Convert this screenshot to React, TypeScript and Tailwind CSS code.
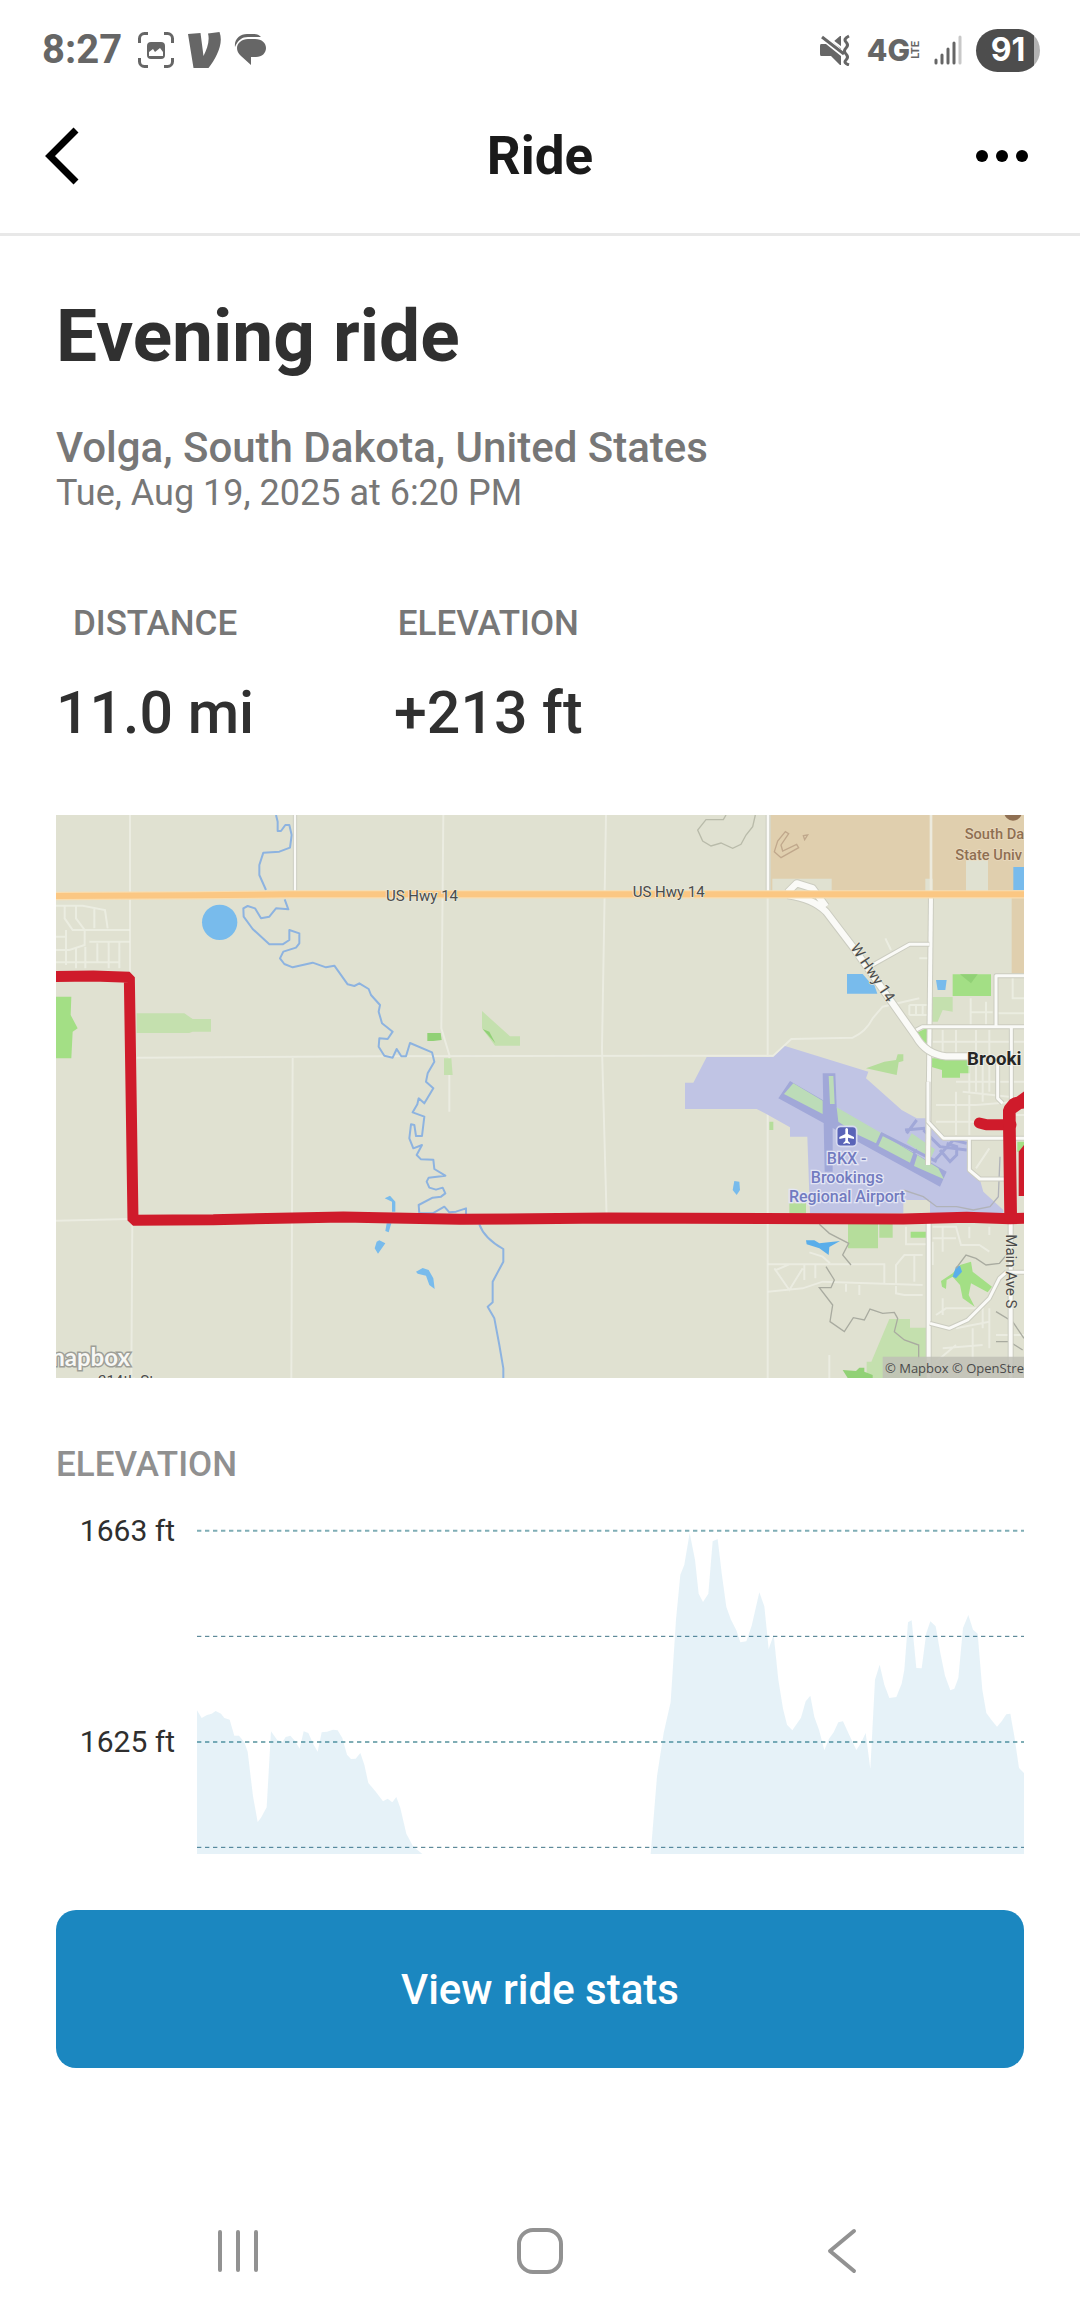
import type { ReactNode } from 'react'

const stats = [
  ['DISTANCE', '11.0 mi'],
  ['ELEVATION', '+213 ft'],
]

const gridLines = [
  { y: 53, color: '#7fadb5', width: 6 },
  { y: 370, color: '#3f7486', width: 3 },
  { y: 687, color: '#7fadb5', width: 6 },
  { y: 1003, color: '#3f7486', width: 3 },
]

const profileWest =
  'M0 592L14 615 30 606 44 602 56 594 72 602 82 615 98 620 112 668 126 668 142 688 152 716 168 850 182 927 192 914 209 883 222 655 240 680 256 688 266 672 280 668 294 684 308 707 320 655 334 660 350 695 362 716 374 658 390 656 408 650 422 652 436 675 450 725 462 738 476 737 490 720 502 755 514 810 534 833 558 865 572 857 586 868 598 852 610 885 628 962 648 1000 676 1023H0Z'

const profileEast =
  'M1361 1023L1380 790 1400 660 1421 567 1437 320 1450 185 1462 155 1478 60 1494 140 1505 242 1518 267 1534 242 1547 85 1562 78 1574 180 1588 282 1602 320 1618 352 1630 388 1648 385 1664 338 1687 238 1702 280 1715 408 1730 365 1744 500 1758 587 1770 635 1786 652 1812 614 1826 565 1840 548 1852 612 1866 650 1882 712 1896 677 1910 658 1924 628 1938 625 1954 660 1978 711 1992 690 2006 660 2020 768 2034 500 2048 455 2062 515 2077 555 2098 552 2114 512 2122 470 2133 328 2144 322 2158 465 2174 466 2188 360 2200 325 2216 340 2230 420 2244 488 2260 532 2272 527 2284 495 2298 345 2314 306 2328 350 2342 362 2356 530 2368 600 2384 622 2400 641 2414 625 2428 604 2440 602 2452 670 2466 765 2481 780V1023Z'

function StatusBar() {
  return (
    <div className="flex h-[78px] items-center justify-between pl-[42px] pr-10 pt-[22px] text-[#666]">
      <div className="flex items-center gap-4">
        <span className="text-[40px] font-bold leading-10">8:27</span>
        <svg viewBox="0 0 36 36" className="h-9 w-9" fill="none" stroke="currentColor" strokeWidth="3">
          <path d="M1.500 11V6.500A5 5 0 0 1 6.500 1.500H10M26 1.500H29.500A5 5 0 0 1 34.500 6.500V11M34.500 26V29.500A5 5 0 0 1 29.500 34.500H26M10 34.500H6.500A5 5 0 0 1 1.500 29.500V26" />
          <rect x="9" y="10" width="18" height="17" rx="4" fill="currentColor" stroke="none" />
          <path d="M11 23V20L15 17 17 20 22 16 25 20V24H11Z" fill="#fff" stroke="none" />
        </svg>
        <svg viewBox="0 0 34 36" className="-ml-0.5 h-9 w-[34px]" fill="currentColor">
          <path d="M0 2L12.500 1 15.500 24C19 17 22 9 20 1.500L31.500 0C36 12 28 26 20.500 36H5.500Z" />
        </svg>
        <svg viewBox="0 0 32 32" className="-ml-1 h-8 w-8" fill="currentColor">
          <path d="M1 13C0 5 6 0 13 0H19C23 0 25 1 27 3H14C8 3 4 6 1 13Z" />
          <path d="M14 5H21C28 5 32 9 32 14S28 23 22 23H17V31L7 22C4 19 3 17 3 14C3 9 8 5 14 5Z" />
        </svg>
      </div>
      <div className="flex items-center gap-3">
        <svg viewBox="0 0 32 32" className="mr-1 h-8 w-8" fill="currentColor">
          <path d="M2 10H7L22 22V31H21L12 22H2Q1 22 1 20V12Q1 10 2 10ZM14 8L21 2H22V15Z" />
          <path d="M3 3L25 20" stroke="currentColor" strokeWidth="3" fill="none" />
          <path d="M6 1L28 18" stroke="#fff" strokeWidth="2" fill="none" />
          <path d="M30 2Q24 5 27 8T27 14T27 20T27 26T30 31" stroke="currentColor" strokeWidth="3" fill="none" />
        </svg>
        <span className="flex items-center">
          <span className="font-[Inter] text-[30px] font-extrabold leading-8">4G</span>
          <span className="rotate-180 text-[11px] font-bold leading-3 [writing-mode:vertical-rl]">LTE</span>
        </span>
        <svg viewBox="0 0 28 30" className="mr-0.5 h-[30px] w-7" stroke="currentColor" strokeWidth="3" strokeLinecap="round">
          <path d="M2 25V28M8 20V28M14 14V28M20 8V28" />
          <path d="M26 2V28" stroke="#c8c8c8" />
        </svg>
        <span className="flex h-[43px] w-16 items-center justify-center rounded-full bg-linear-to-r from-[#4d4d4d] from-90% to-[#b3b3b3] to-90% font-[Inter] text-[32px] font-bold leading-8 text-white">
          91
        </span>
      </div>
    </div>
  )
}

function Header() {
  return (
    <header className="grid h-[158px] grid-cols-[1fr_auto_1fr] items-center border-b-[3px] border-[#e8e8e8] px-[45px]">
      <button type="button" aria-label="Back" className="justify-self-start">
        <svg viewBox="0 0 34 58" className="h-[58px] w-[34px]" fill="none" stroke="#000" strokeWidth="7">
          <path d="M31 3L5 29 31 55" />
        </svg>
      </button>
      <h1 className="text-[53px] font-bold leading-[64px] text-[#1a1a1a]">Ride</h1>
      <button type="button" aria-label="More options" className="mr-[7px] justify-self-end">
        <svg viewBox="0 0 52 12" className="h-3 w-[52px]" fill="#000">
          <circle cx="6" cy="6" r="6" />
          <circle cx="26" cy="6" r="6" />
          <circle cx="46" cy="6" r="6" />
        </svg>
      </button>
    </header>
  )
}

function MinorRoads({ children }: { children: ReactNode }) {
  return (
    <g fill="none" stroke="#f1f2ea" strokeWidth="6" opacity="0.65">
      {children}
    </g>
  )
}

function MajorRoad({ d, width = 12 }: { d: string; width?: number }) {
  return (
    <g fill="none" strokeLinejoin="round">
      <path d={d} stroke="#cbccc0" strokeWidth={width + 6} />
      <path d={d} stroke="#fafaf7" strokeWidth={width} />
    </g>
  )
}

function RouteMap() {
  return (
    <svg
      role="img"
      aria-label="Map of the ride"
      viewBox="0 0 2904 1689"
      className="mt-[66px] block h-auto w-full bg-[#e0e1d1] font-[Roboto,sans-serif]"
    >
      {/* campus */}
      <path d="M2144 0H2904V475H2867V245H2144Z" fill="#e0cfae" />
      <path d="M2149 191H2327V230H2149ZM2608 191H2630V230H2608ZM2730 130H2796V230H2730Z" fill="#e0e1d1" />

      {/* section roads */}
      <MinorRoads>
        <path d="M222 0V470M229 1220L226 1689M710 725L706 1689M242 728L972 724L1882 722H2152L2206 672L2390 668Q2430 650 2450 610L2480 575L2590 550" />
        <path d="M1162 0L1156 640L1180 720V890M1650 0L1638 700L1652 1209M2135 245V725M2135 890V1689M0 1217L220 1212M2320 1620V1689" />
      </MinorRoads>

      {/* west town streets */}
      <MinorRoads>
        <path d="M0 272H80L147 285 155 340M26 272V310L50 345H222M60 270V310L86 345V390L40 405H0M115 280V340M100 380H222M0 442H190M60 400V460M88 395V460M124 385V440M158 380V460M190 380V460M30 345V450M0 365H30" />
      </MinorRoads>

      {/* parks */}
      <path d="M0 545H46L44 600 65 640 50 650 46 730H0Z" fill="#a3df85" />
      <path d="M242 595H385L410 612H465V650H410L400 654H242Z" fill="#c4e0ae" />
      <path d="M1114 654H1154L1157 675 1132 678H1114Z" fill="#91d176" />
      <path d="M1278 588L1362 664H1392V692H1317L1278 640Z" fill="#c4e0ae" />
      <path d="M1164 730H1186L1190 780H1164Z" fill="#c4e0ae" />
      <path d="M1280 642L1300 650 1318 685Z" fill="#91d176" />
      <path d="M2690 478H2805V543H2690Z" fill="#a3df85" />
      <path d="M2712 478L2745 505 2765 478Z" fill="#91d176" />
      <path d="M2628 546H2690V590L2660 585 2645 620H2628Z" fill="#c4e0ae" />
      <path d="M2580 655L2616 637V690L2580 660Z" fill="#a3df85" />
      <path d="M2624 730H2740L2742 775H2712V788H2658V765L2624 755Z" fill="#a3df85" />
      <path d="M2430 760L2485 740 2520 735 2525 718H2542V738L2528 742 2522 780Z" fill="#b5dd9b" />

      {/* river */}
      <g fill="none" stroke="#8db3e0" strokeWidth="6" strokeLinejoin="round">
        <path d="M660 0L665 20V48H675L688 30H700L707 60 702 98 670 110 622 113 610 150V180L630 225" />
        <path d="M686 253L697 283 660 280 640 305 615 310 597 280 575 273 562 280 563 305 590 342 640 388 680 388 700 375V345L730 355V385L720 398 682 410 672 430 685 447 710 457 770 443 810 457 835 452 875 508 895 513 910 505 938 522 945 540 972 570 968 590 978 625 1010 650 995 672 970 670 968 695 985 722 1010 728 1022 702 1036 724H1050L1062 684 1128 712 1135 740 1115 775 1110 800 1132 820 1105 865 1088 850 1084 868 1070 892 1105 905 1098 963H1080L1075 930 1065 928 1060 970 1072 1000 1098 990 1082 1020 1095 1033 1132 1034 1135 1062 1168 1082 1118 1088 1112 1100 1120 1118 1140 1124 1160 1118 1168 1135 1155 1145 1130 1148 1088 1170 1090 1195 1130 1195 1165 1175 1180 1192 1200 1190 1230 1180V1200" />
        <path d="M1270 1228Q1285 1270 1342 1302V1340L1310 1400V1462L1295 1475 1315 1510 1330 1590 1342 1660V1689" />
      </g>

      {/* ponds */}
      <g fill="#78bbec">
        <circle cx="491" cy="322" r="53" />
        <path d="M986 1150L1002 1142 1018 1160V1190H1008V1160ZM992 1225H1006L998 1252 988 1248ZM970 1276L988 1285 966 1316 956 1300 962 1280Z" />
        <path d="M1080 1370L1100 1359 1118 1365 1132 1390 1136 1422 1120 1410 1110 1382 1085 1376Z" />
        <path d="M2373 477H2420L2440 500 2455 510 2464 536H2373ZM2640 495H2672L2668 525H2645ZM2872 156H2904V225H2872Z" />
        <path d="M2035 1098L2050 1100 2052 1125 2042 1140 2030 1125Z" />
      </g>

      {/* contour outlines */}
      <g fill="none" stroke="#b9bbaa" strokeWidth="4">
        <path d="M2010 0L2002 14H1950L1925 45 1940 78 1965 93 1995 84 2030 100 2055 88 2070 60 2090 35 2098 0" />
        <path d="M2188 50L2165 78 2155 110 2175 128 2228 98 2222 88 2180 108 2175 90 2198 56ZM2242 62L2255 60 2246 74Z" stroke="#c0a88c" />
      </g>

      {/* downtown streets */}
      <MinorRoads>
        <path d="M2744 550V640M2790 560V640M2744 592H2810M2870 480V550H2904M2820 595H2904M2560 570V600M2580 570V600M2600 570V600M2560 570H2615M2560 600H2615M2590 430H2616M2488 370L2505 405" />
        <path d="M2660 645V720M2700 645V720M2760 645V830M2800 645V830M2630 680H2904M2740 745V830M2780 720V860M2700 800H2904M2720 830L2904 850M2640 870L2760 870 2880 860M2700 830V960M2740 840V960M2860 900H2904M2640 920H2820M2760 1060L2800 1000" />
        <path d="M2630 1235H2700L2715 1290H2770L2800 1310M2660 1235V1310M2740 1235V1270M2800 1235V1260M2630 1270H2700M2550 1235V1288H2610M2630 1280V1350" />
        <path d="M2135 1348H2485V1410M2155 1360L2200 1425 2240 1360M2160 1365 2200 1348M2245 1350V1395M2278 1350V1390M2135 1430L2240 1420 2300 1400 2600 1410M2410 1410V1440M2370 1400V1430M2600 1320H2545L2520 1350V1435L2545 1440H2600M2575 1320V1400M2260 1312L2300 1325 2322 1345" />
        <path d="M2640 1500L2670 1480H2780V1540M2700 1540L2800 1520M2660 1600 2780 1590M2750 1540V1640M2640 1640L2700 1590M2660 1450V1500M2800 1480V1600M2820 1560H2904M2630 1680L2680 1640" />
      </MinorRoads>

      {/* south parks */}
      <path d="M2376 1225H2466V1300H2376ZM2470 1225H2510V1268H2470Z" fill="#b5dd9b" />
      <path d="M2564 1250H2612V1268H2564ZM2884 980H2904V1010H2884Z" fill="#a3df85" />
      <path d="M2200 1165H2250V1195H2200ZM2140 920H2152V945H2140Z" fill="#b5dd9b" />
      <path d="M2500 1512H2562V1538H2614V1689H2432V1640H2446Z" fill="#c4e0ae" />
      <path d="M2360 1665L2400 1668 2410 1658H2425V1670L2450 1680V1689H2375Z" fill="#91d176" />
      <path d="M2712 1350L2745 1340 2750 1370 2808 1415 2795 1432 2745 1405 2738 1440 2756 1475 2720 1450 2712 1410 2690 1385 2672 1395 2670 1422 2658 1415 2655 1398 2690 1375Z" fill="#a3df85" />
      <path d="M2690 1385L2700 1355 2712 1352 2718 1370 2700 1390Z" fill="#5aaeea" />
      <path d="M2250 1276H2275L2290 1285 2352 1278 2320 1296 2318 1320 2290 1300 2252 1288Z" fill="#5aaeea" />

      <g fill="none" stroke="#a9aba0" strokeWidth="4">
        <path d="M2290 1228L2320 1255 2378 1285 2360 1320 2385 1350M2310 1355L2335 1395 2325 1418H2290L2330 1470 2322 1520 2365 1550 2392 1508 2425 1515 2442 1482 2480 1495 2515 1492 2525 1510 2515 1550 2545 1575 2588 1590V1630" />
        <path d="M2700 1360L2730 1320 2760 1330 2790 1350 2830 1345 2860 1310M2820 1490L2870 1520 2904 1570M2820 1580H2860L2900 1605" />
      </g>

      {/* airport grounds */}
      <path
        d="M1887 803H1912L1952 726H2152L2187 693 2437 770 2430 790 2537 885 2582 910H2614L2622 935 2662 970 2734 975 2737 1065 2772 1095 2782 1130 2842 1185V1195H2622V1155H2542V1195H2262L2254 965H2202V937L2127 895 2102 882H1887Z"
        fill="#c0c4e4"
      />
      <g transform="translate(1902 825)">
        <path d="M300-27L770 245 750 290 265 25ZM398-50H436L442 100H428V245H404Z" fill="#a1a8d8" />
        <path
          d="M310-20L398 32V72L282 12ZM416-42H430L434 42H420ZM440 52L572 128 558 160 505 135 445 95ZM580 135L670 190 660 218 565 168ZM682 195L745 235 762 268 672 228ZM665 130L735 178 722 205 650 158Z"
          fill="#bcdcb8"
        />
        <path
          d="M572 130L740 215M645 120L705 115M680 90L650 130M670 190L682 180M735 210L790 150 830 160M750 180L780 215 800 195V170L770 160M700 120L750 170 830 180"
          fill="none"
          stroke="#a1a8d8"
          strokeWidth="9"
        />
        <path d="M640 300L700 320 740 350 800 350 850 360 900 350 925 320 930 200" fill="none" stroke="#b0b2b8" strokeWidth="4" />
      </g>

      {/* highways */}
      <MajorRoad d="M717 0V240" width={7} />
      <MajorRoad d="M2136 0V240" width={8} />
      <path d="M2625 0V235" stroke="#eceadd" strokeWidth="8" />
      <MajorRoad d="M2625 240L2616 1050" />
      <MajorRoad d="M2616 800V920L2662 970H2904M2740 972V1065L2772 1092H2850" width={9} />
      <MajorRoad d="M2618 1220V1689M2864 1220V1689" />
      <MajorRoad d="M2622 1525L2680 1540 2735 1515 2800 1450 2830 1390 2850 1372H2904" width={9} />
      <MajorRoad d="M2450 450L2560 388H2620M2575 648L2600 635H2904M2820 635V482H2904M2866 640V880M2825 730V850L2840 865" width={9} />
      <MajorRoad d="M2195 232L2222 205 2270 220 2310 275M2195 240Q2270 250 2310 290L2390 395 2580 665Q2610 718 2670 724H2740" width={19} />
      <path d="M0 243L420 241 700 238H2904" fill="none" stroke="#f8ddb0" strokeWidth="25" />
      <path d="M0 243L420 241 700 238H2904" fill="none" stroke="#fbc783" strokeWidth="18" />

      {/* ride track */}
      <g fill="none" stroke="#cf1b2b" strokeWidth="33" strokeLinejoin="bevel">
        <path d="M-10 485L112 483 220 487 231 1216 472 1214 862 1206 972 1208 1212 1213 1652 1209 2542 1212 2732 1207 2862 1211 2920 1209" />
        <path d="M2770 924L2790 929H2865" strokeLinecap="round" />
        <path d="M2864 1205L2860 925V885L2876 866 2920 858M2866 880L2915 845" strokeWidth="38" strokeLinecap="round" />
      </g>
      <path d="M2888 1010L2904 990V1143H2888Z" fill="#cf1b2b" />

      {/* labels */}
      <g fill="#4b4b4b" fontSize="45" stroke="#e7e8da" strokeWidth="5" paintOrder="stroke">
        <text x="990" y="257">US Hwy 14</text>
        <text x="1730" y="247">US Hwy 14</text>
        <text transform="translate(2382 398) rotate(56)">W Hwy 14</text>
        <text transform="translate(2850 1258) rotate(90)">Main Ave S</text>
        <text x="126" y="1712">214th St</text>
      </g>
      <text x="2733" y="750" fontSize="56" fontWeight="700" fill="#262626" stroke="#eeefe5" strokeWidth="5" paintOrder="stroke">
        Brooki
      </text>
      <g fill="#8f6f52" fontSize="44" fontWeight="500" stroke="#eadbc0" strokeWidth="4" paintOrder="stroke">
        <circle cx="2871" cy="-10" r="27" stroke="none" />
        <text x="2726" y="73">South Da</text>
        <text x="2698" y="135">State Univ</text>
      </g>
      <g transform="translate(2372 964)">
        <rect x="-30" y="-30" width="60" height="60" rx="12" fill="#5a64b8" stroke="#d8dbf0" strokeWidth="5" />
        <path d="M-4-22Q0-28 4-22V-7L22 2V8L4 4V14L10 20V23L0 20-10 23V20L-4 14V4L-22 8V2L-4-7Z" fill="#fff" />
      </g>
      <g fill="#727bc0" fontSize="48" fontWeight="500" textAnchor="middle" stroke="#e4e6f4" strokeWidth="8" paintOrder="stroke">
        <text x="2372" y="1047">BKX -</text>
        <text x="2373" y="1104">Brookings</text>
        <text x="2373" y="1160">Regional Airport</text>
      </g>
      <text x="-34" y="1652" fontSize="72" fontWeight="700" fill="#f7f7f4" stroke="#9d9e97" strokeWidth="9" paintOrder="stroke" className="font-[Lato]">
        mapbox
      </text>
      <path d="M2480 1625H2904V1689H2480Z" fill="#bfc0b6" opacity="0.85" />
      <text x="2487" y="1675" fontSize="39" fill="#4a4a4a" className="font-['Open_Sans']">
        © Mapbox © OpenStre
      </text>
    </svg>
  )
}

function ElevationChart() {
  return (
    <section>
      <h3 className="mt-[67px] text-[35px] font-medium leading-10 text-[#909090]">ELEVATION</h3>
      <div className="mt-7 grid grid-cols-[119px_1fr] gap-[22px]">
        <div className="flex flex-col gap-[175px] text-right text-[30px] leading-9 text-[#2f2f2f]">
          <span>1663 ft</span>
          <span>1625 ft</span>
        </div>
        <svg viewBox="0 0 2481 1023" preserveAspectRatio="none" className="block h-[341px] w-full">
          {gridLines.map(({ y, color, width }) => (
            <path key={y} d={`M0 ${y}H2481`} stroke={color} strokeWidth={width} strokeDasharray="13 11" />
          ))}
          <path d={profileWest} fill="#1b87c0" fillOpacity="0.11" />
          <path d={profileEast} fill="#1b87c0" fillOpacity="0.11" />
        </svg>
      </div>
    </section>
  )
}

function SystemNav() {
  return (
    <nav className="mt-[118px] grid h-[130px] grid-cols-3 place-items-center px-[87px] text-[#929292]">
      <button type="button" aria-label="Recent apps">
        <svg viewBox="0 0 42 48" className="h-12 w-[42px]" stroke="currentColor" strokeWidth="4" strokeLinecap="round">
          <path d="M3 5V43M21 5V43M39 5V43" />
        </svg>
      </button>
      <button type="button" aria-label="Home">
        <svg viewBox="0 0 48 48" className="h-12 w-12" fill="none" stroke="currentColor" strokeWidth="4">
          <rect x="3" y="3" width="42" height="42" rx="14" />
        </svg>
      </button>
      <button type="button" aria-label="Go back">
        <svg viewBox="0 0 32 48" className="h-12 w-8" fill="none" stroke="currentColor" strokeWidth="4" strokeLinecap="round" strokeLinejoin="round">
          <path d="M28 4L4 24 28 44" />
        </svg>
      </button>
    </nav>
  )
}

export default function App() {
  return (
    <div className="bg-white font-[Roboto,sans-serif]">
      <StatusBar />
      <Header />
      <main className="px-14 pt-[58px]">
        <h2 className="text-[73px] font-bold leading-[84px] text-[#303030]">Evening ride</h2>
        <p className="mt-[46px] text-[42px] font-medium leading-[47px] text-[#777]">Volga, South Dakota, United States</p>
        <p className="text-[36px] leading-[44px] text-[#777]">Tue, Aug 19, 2025 at 6:20 PM</p>
        <dl className="mt-[89px] flex gap-[140px]">
          {stats.map(([label, value]) => (
            <div key={label} className="text-center">
              <dt className="text-[35px] font-medium leading-10 text-[#777]">{label}</dt>
              <dd className="mt-[33px] text-[59px] font-medium leading-[72px] text-[#303030]">{value}</dd>
            </div>
          ))}
        </dl>
        <RouteMap />
        <ElevationChart />
        <button
          type="button"
          className="mt-14 h-[158px] w-full rounded-[20px] bg-[#1b87c0] text-[42px] font-medium text-white"
        >
          View ride stats
        </button>
      </main>
      <SystemNav />
    </div>
  )
}
